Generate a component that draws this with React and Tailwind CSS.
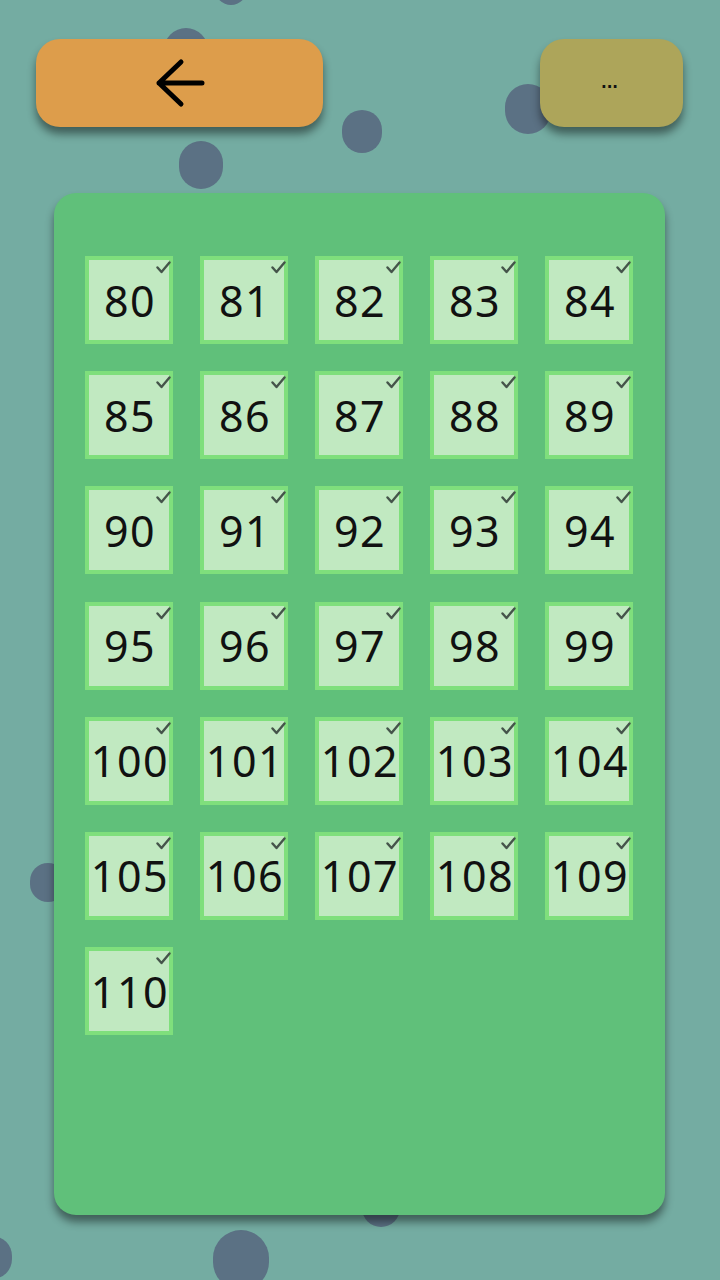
import React from 'react'

const levels = Array.from({ length: 31 }, (_, i) => 80 + i)

// background blobs: [left, top, size]
const dots = [
  [215, -30, 32],
  [164, 28, 44],
  [179, 141, 44],
  [342, 110, 40],
  [505, 84, 46],
  [30, 863, 36],
  [362, 1186, 38],
  [213, 1230, 56],
  [-28, 1236, 40],
]

function Tile({ n }) {
  return (
    <div className="relative w-[88px] h-[88px] border-4 border-[#7fdf7c] bg-[#c1e9c1] flex items-center justify-center">
      <span className="text-[43px] leading-none text-[#111] tracking-[1.5px] pl-[2px]" style={{ fontFamily: '"Noto Sans", sans-serif' }}>
        {n}
      </span>
      <svg className="absolute top-[1px] right-[-2px]" width="15" height="13" viewBox="0 0 15 13">
        <polyline points="1.5,6.5 5.5,11 13.5,1.5" fill="none" stroke="#45544a" strokeWidth="2.4" strokeLinecap="round" strokeLinejoin="round" />
      </svg>
    </div>
  )
}

export default function App() {
  return (
    <div className="relative w-[720px] h-[1280px] overflow-hidden bg-[#74aca2]">
      {dots.map(([x, y, s], i) => (
        <div
          key={i}
          className="absolute rounded-full bg-[#5b7184]"
          style={{ left: x, top: y, width: s, height: s * 1.08 }}
        />
      ))}

      <div className="relative flex flex-col">
        <div className="flex justify-between px-[36px] pt-[39px] pr-[37px]">
          <button className="w-[287px] h-[88px] rounded-[24px] bg-[#dd9d4b] shadow-[0_7px_9px_rgba(0,0,0,0.45)] flex items-center justify-center">
            <svg width="50" height="50" viewBox="0 0 50 50">
              <path d="M26 4 L4 25 L26 46 M4 25 L47 25" fill="none" stroke="#000" strokeWidth="5" strokeLinecap="round" strokeLinejoin="round" />
            </svg>
          </button>
          <button className="w-[143px] h-[88px] rounded-[24px] bg-[#ada55a] shadow-[0_7px_9px_rgba(0,0,0,0.45)] flex items-center justify-center">
            <span className="text-[15px] font-bold text-[#111] leading-none pr-[4px]" style={{ fontFamily: '"DejaVu Sans", sans-serif' }}>...</span>
          </button>
        </div>

        <div className="ml-[54px] mt-[66px] w-[611px] h-[1022px] rounded-[22px] bg-[#60c07a] shadow-[0_7px_9px_rgba(0,0,0,0.45)] pl-[31px] pt-[63px]">
          <div className="grid grid-cols-[repeat(5,88px)] gap-x-[27px] gap-y-[27.2px]">
            {levels.map(n => (
              <Tile key={n} n={n} />
            ))}
          </div>
        </div>
      </div>
    </div>
  )
}
